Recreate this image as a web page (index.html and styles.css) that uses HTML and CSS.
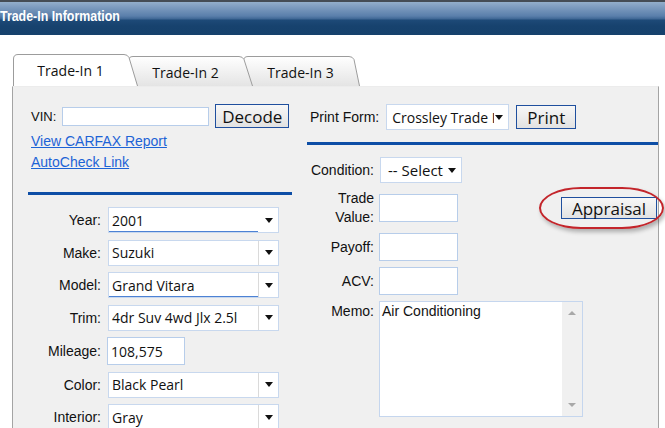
FILE: index.html
```html
<!DOCTYPE html>
<html>
<head>
<meta charset="utf-8">
<title>Trade-In Information</title>
<link rel="stylesheet" href="styles.css">
</head>
<body>
<div class="header"><h1 class="title">Trade-In Information</h1></div>

<div class="tabs">
  <div class="tab tab-1 tab-active">
    <svg class="tab-shape" width="125" height="32" viewBox="0 0 125 32">
      <path d="M0.5 32 V5 Q0.5 0.5 5 0.5 H111 Q114.5 0.5 116 3.5 L124.5 32" fill="#ffffff" stroke="#9c9c9c"/>
    </svg>
    <span class="tab-label">Trade-In 1</span>
  </div>
  <div class="tab tab-2">
    <svg class="tab-shape" width="125" height="30" viewBox="0 0 125 30">
      <defs>
        <linearGradient id="tabgrad" x1="0" y1="0" x2="0" y2="1">
          <stop offset="0" stop-color="#ffffff"/>
          <stop offset="1" stop-color="#e4e4e4"/>
        </linearGradient>
      </defs>
      <path d="M0.5 30 V5 Q0.5 0.5 5 0.5 H111 Q114.5 0.5 116 3.5 L124.5 30" fill="url(#tabgrad)" stroke="#9c9c9c"/>
    </svg>
    <span class="tab-label">Trade-In 2</span>
  </div>
  <div class="tab tab-3">
    <svg class="tab-shape" width="125" height="30" viewBox="0 0 125 30">
      <path d="M0.5 30 V5 Q0.5 0.5 5 0.5 H106 Q109.5 0.5 111 3.5 L116.5 30" fill="url(#tabgrad)" stroke="#9c9c9c"/>
    </svg>
    <span class="tab-label">Trade-In 3</span>
  </div>
</div>

<div class="panel">
  <div class="col-left">
    <div class="vin-row">
      <span class="lbl vin-lbl">VIN:</span>
      <span class="input vin-input"></span>
      <button class="btn btn-decode">Decode</button>
    </div>
    <div class="links">
      <a class="link" href="#">View CARFAX Report</a>
      <a class="link" href="#">AutoCheck Link</a>
    </div>
    <div class="rule rule-left"></div>
    <div class="form-grid">
      <span class="flabel">Year:</span>
      <div class="sel sel-plain sel-focus"><span class="sel-text">2001</span><span class="sel-arrow"><span class="tri"></span></span></div>

      <span class="flabel">Make:</span>
      <div class="sel"><span class="sel-text">Suzuki</span><span class="sel-arrow"><span class="tri"></span></span></div>

      <span class="flabel">Model:</span>
      <div class="sel sel-focus"><span class="sel-text">Grand Vitara</span><span class="sel-arrow"><span class="tri"></span></span></div>

      <span class="flabel">Trim:</span>
      <div class="sel"><span class="sel-text">4dr Suv 4wd Jlx 2.5l</span><span class="sel-arrow"><span class="tri"></span></span></div>

      <span class="flabel">Mileage:</span>
      <div class="input mileage-input">108,575</div>

      <span class="flabel">Color:</span>
      <div class="sel"><span class="sel-text">Black Pearl</span><span class="sel-arrow"><span class="tri"></span></span></div>

      <span class="flabel">Interior:</span>
      <div class="sel"><span class="sel-text">Gray</span><span class="sel-arrow"><span class="tri"></span></span></div>
    </div>
  </div>

  <div class="col-right">
    <div class="print-row">
      <span class="lbl">Print Form:</span>
      <div class="sel sel-print sel-plain"><span class="sel-text">Crossley Trade In</span><span class="sel-arrow sel-arrow-small"><span class="tri"></span></span></div>
      <button class="btn btn-print">Print</button>
    </div>
    <div class="rule rule-right"></div>
    <div class="right-grid">
      <span class="rlabel">Condition:</span>
      <div class="sel sel-cond sel-plain"><span class="sel-text">-- Select --</span><span class="sel-arrow sel-arrow-small"><span class="tri"></span></span></div>

      <span class="rlabel rlabel-two">Trade<br>Value:</span>
      <div class="input money-input"></div>
      <div class="appraisal-wrap">
        <button class="btn btn-appraisal">Appraisal</button>
        <span class="highlight-ring"></span>
      </div>

      <span class="rlabel">Payoff:</span>
      <div class="input money-input"></div>

      <span class="rlabel">ACV:</span>
      <div class="input money-input"></div>

      <span class="rlabel rlabel-top">Memo:</span>
      <div class="memo">
        <div class="memo-text">Air Conditioning</div>
        <div class="memo-scroll"><span class="sc-up"></span><span class="sc-down"></span></div>
      </div>
    </div>
  </div>
</div>
</body>
</html>
```

FILE: styles.css
```css
* { box-sizing: border-box; }

html, body {
  margin: 0;
  padding: 0;
  background: #ffffff;
  width: 665px;
  height: 428px;
  overflow: hidden;
  font-family: "Liberation Sans", Arial, sans-serif;
  color: #111;
}

.header {
  height: 35px;
  background: linear-gradient(to bottom,
    #454c55 0px, #454c55 2px,
    #93aecb 2px, #7e9cbf 7px, #5a7fab 16px, #3e6694 19px,
    #1e4a78 20px, #17426e 26px, #16416c 35px);
}

.title {
  display: inline-block;
  margin: 0;
  font-family: "Liberation Sans", Arial, sans-serif;
  font-weight: bold;
  font-size: 15.5px;
  line-height: 32px;
  color: #ffffff;
  transform: scaleX(0.8);
  transform-origin: left center;
}

.tabs {
  display: flex;
  align-items: flex-end;
  margin-top: 19px;
  padding-left: 13px;
  height: 32px;
}

.tab {
  position: relative;
  width: 125px;
  height: 30px;
  display: flex;
  align-items: center;
  justify-content: center;
  padding-right: 10px;
  font-family: "Open Sans", "Noto Sans", sans-serif;
  font-size: 14px;
  color: #111;
}

.tab-active { height: 32px; z-index: 3; }
.tab-2 { margin-left: -10px; z-index: 2; }
.tab-3 { margin-left: -10px; z-index: 1; width: 117px; padding-right: 2px; }

.tab-shape {
  position: absolute;
  left: 0;
  top: 0;
}

.tab-label {
  position: relative;
  padding-top: 1px;
}

.tab-2 .tab-label, .tab-3 .tab-label { padding-top: 3px; }

.panel {
  display: flex;
  margin-left: 12px;
  width: 647px;
  height: 342px;
  background: #f0f0f0;
  border-left: 1px solid #a4a4a4;
  border-right: 1px solid #a4a4a4;
  border-top: 1px solid #ececec;
}

.col-left {
  width: 287px;
  padding: 17px 8px 0 15px;
}

.col-right {
  flex: 1;
  padding-top: 17px;
}

.lbl {
  font-size: 14px;
  color: #111;
}

.vin-row {
  display: flex;
  align-items: center;
  height: 24px;
  margin-left: 3px;
}

.vin-lbl { font-size: 13px; }

.input {
  background: #ffffff;
  border: 1px solid #b7cdea;
}

.vin-input {
  width: 147px;
  height: 19px;
  margin-left: 6px;
}

.btn {
  font-family: "Open Sans", "Noto Sans", sans-serif;
  font-size: 17px;
  line-height: 1;
  color: #111;
  border: 1px solid #1f4f9e;
  background: linear-gradient(to bottom, #f7f7f7, #e2e2e2);
  padding: 0;
  margin: 0;
  border-radius: 0;
}

.btn-decode {
  width: 74px;
  height: 24px;
  margin-left: 6px;
}

.links {
  display: flex;
  flex-direction: column;
  align-items: flex-start;
  gap: 5px;
  margin-top: 5px;
  margin-left: 3px;
}

.link {
  font-size: 14px;
  line-height: 16px;
  color: #1d63d6;
  text-decoration: underline;
}

.rule {
  height: 3px;
  background: #0d4ea6;
}

.rule-left {
  margin-top: 22px;
}

.form-grid {
  display: grid;
  grid-template-columns: 73px 171px;
  column-gap: 7px;
  row-gap: 6.5px;
  margin-top: 12px;
  align-items: center;
}

.flabel {
  text-align: right;
  font-size: 14px;
  color: #111;
}

.sel {
  display: flex;
  height: 26px;
  background: #ffffff;
  border: 1px solid #c8d8ee;
  font-family: "Open Sans", "Noto Sans", sans-serif;
  font-size: 14px;
  color: #111;
  overflow: hidden;
}

.sel-text {
  flex: 1;
  display: flex;
  align-items: center;
  padding-left: 3px;
  white-space: nowrap;
  overflow: hidden;
}

.sel-arrow {
  width: 20px;
  flex: none;
  display: flex;
  align-items: center;
  justify-content: center;
  border-left: 1px solid #dadada;
}

.sel-plain .sel-arrow { border-left-color: transparent; }

.sel-focus .sel-text { box-shadow: inset 0 -1px 0 #4d82d4; }

.tri {
  width: 0;
  height: 0;
  border-left: 4.5px solid transparent;
  border-right: 4.5px solid transparent;
  border-top: 5px solid #111;
}

.mileage-input {
  width: 78px;
  height: 28px;
  margin-left: -1px;
  display: flex;
  align-items: center;
  padding-left: 3px;
  font-family: "Open Sans", "Noto Sans", sans-serif;
  font-size: 14px;
}

.print-row {
  display: flex;
  align-items: center;
  height: 26px;
  padding-left: 10px;
}

.sel-print {
  width: 123px;
  margin-left: 7px;
}

.sel-print .sel-text { padding-left: 5px; }

.sel-arrow-small {
  width: 14px;
  justify-content: flex-start;
}

.btn-print {
  width: 60px;
  height: 24px;
  margin-left: 7px;
}

.rule-right {
  margin-top: 12px;
  margin-left: 7px;
}

.right-grid {
  display: grid;
  grid-template-columns: 67px 83px 1fr;
  column-gap: 5px;
  row-gap: 6px;
  margin-top: 12px;
  margin-left: 7px;
  align-items: center;
}

.rlabel {
  text-align: right;
  font-size: 14px;
  color: #111;
  grid-column: 1;
}

.rlabel-two {
  line-height: 19px;
}

.rlabel-top {
  align-self: start;
  padding-top: 2px;
}

.sel-cond {
  width: 82px;
  margin-left: 1px;
  grid-column: 2 / 4;
}

.sel-cond .sel-text { padding-left: 7px; font-size: 15px; }

.money-input {
  width: 79px;
  height: 28px;
  grid-column: 2;
}

.appraisal-wrap {
  position: relative;
  justify-self: end;
  margin-right: 1px;
  grid-column: 3;
}

.btn-appraisal {
  display: block;
  width: 96px;
  height: 22px;
  position: relative;
  z-index: 1;
}

.highlight-ring {
  position: absolute;
  left: -22px;
  top: -10px;
  width: 125px;
  height: 42px;
  border: 2px solid #c3252b;
  border-radius: 42px / 21px;
  box-shadow: 2px 3px 4px rgba(0, 0, 0, 0.28);
  z-index: 2;
  pointer-events: none;
}

.memo {
  grid-column: 2 / 4;
  width: 204px;
  height: 116px;
  display: flex;
  background: #ffffff;
  border: 1px solid #c5d6ee;
}

.memo-text {
  flex: 1;
  padding: 1px 2px;
  font-size: 14px;
  line-height: 16px;
  color: #111;
}

.memo-scroll {
  width: 20px;
  background: #f0f0f0;
  display: flex;
  flex-direction: column;
  justify-content: space-between;
  align-items: center;
  padding: 9px 0 9px;
}

.sc-up {
  width: 0;
  height: 0;
  border-left: 4px solid transparent;
  border-right: 4px solid transparent;
  border-bottom: 4px solid #a8a8a8;
}

.sc-down {
  width: 0;
  height: 0;
  border-left: 4px solid transparent;
  border-right: 4px solid transparent;
  border-top: 4px solid #a8a8a8;
}
```
